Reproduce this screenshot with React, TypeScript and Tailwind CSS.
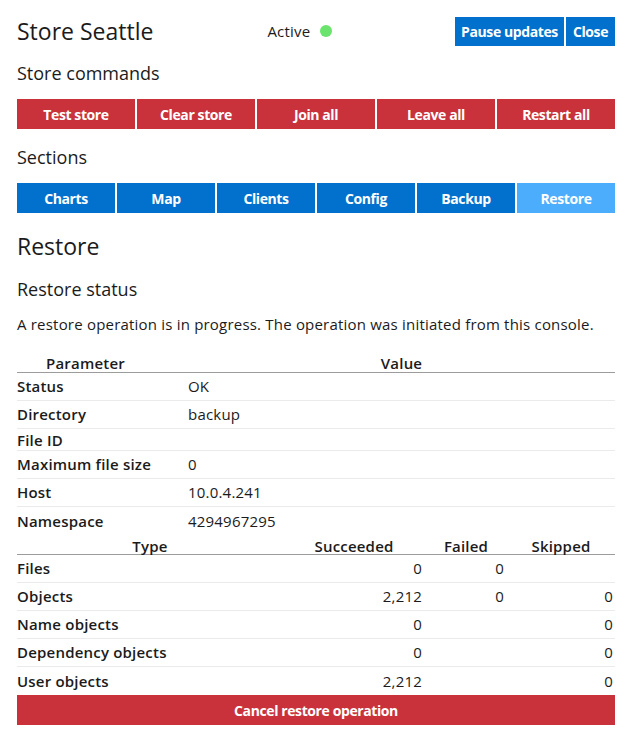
import React from "react";

const commands = ["Test store", "Clear store", "Join all", "Leave all", "Restart all"];
const sections = ["Charts", "Map", "Clients", "Config", "Backup", "Restore"];

const params: [string, string][] = [
  ["Status", "OK"],
  ["Directory", "backup"],
  ["File ID", ""],
  ["Maximum file size", "0"],
  ["Host", "10.0.4.241"],
  ["Namespace", "4294967295"],
];

const counts: [string, string, string, string][] = [
  ["Files", "0", "0", ""],
  ["Objects", "2,212", "0", "0"],
  ["Name objects", "0", "", "0"],
  ["Dependency objects", "0", "", "0"],
  ["User objects", "2,212", "", "0"],
];

function Btn({ label, tone }: { label: string; tone: "red" | "blue" | "light" }) {
  const bg =
    tone === "red" ? "bg-[#c9323b]" : tone === "blue" ? "bg-[#0271cd]" : "bg-[#4dadfd]";
  return (
    <button
      className={`${bg} flex-1 h-[30px] text-white text-[14px] font-bold tracking-[-0.4px] flex items-center justify-center`}
    >
      {label}
    </button>
  );
}

export default function App() {
  return (
    <div className="bg-white min-h-[738px] px-[17px] pt-[16px] font-['Open_Sans',sans-serif] text-[#1b1b1b]">
      {/* header */}
      <div className="flex items-center h-[30px]">
        <h1 className="text-[23px] leading-[30px] font-normal">Store Seattle</h1>
        <div className="flex items-center gap-[10px] text-[15px] tracking-[0.2px] ml-[114px]">
          <span>Active</span>
          <span className="w-[12px] h-[12px] rounded-full bg-[#6ae46d]" />
        </div>
        <div className="flex gap-[2px] ml-auto">
          <button className="bg-[#0271cd] text-white text-[14px] font-bold tracking-[-0.4px] h-[29px] px-[6px]">
            Pause updates
          </button>
          <button className="bg-[#0271cd] text-white text-[14px] font-bold tracking-[-0.4px] h-[29px] px-[7px]">
            Close
          </button>
        </div>
      </div>

      <h3 className="mt-[15px] text-[18px] leading-[24px]">Store commands</h3>
      <div className="mt-[14px] flex gap-[2px]">
        {commands.map((c) => (
          <Btn key={c} label={c} tone="red" />
        ))}
      </div>

      <h3 className="mt-[16px] text-[18px] leading-[24px]">Sections</h3>
      <div className="mt-[14px] flex gap-[2px]">
        {sections.map((s) => (
          <Btn key={s} label={s} tone={s === "Restore" ? "light" : "blue"} />
        ))}
      </div>

      <h2 className="mt-[17px] text-[23px] leading-[32px]">Restore</h2>
      <h3 className="mt-[15px] text-[18px] leading-[24px]">Restore status</h3>
      <p className="mt-[12px] text-[15px] leading-[22px] tracking-[0.2px]">
        A restore operation is in progress. The operation was initiated from this console.
      </p>

      {/* parameters */}
      <div className="mt-[17px] text-[15px] tracking-[0.2px]">
        <div className="grid grid-cols-[171px_1fr] h-[21px] items-center border-b border-[#9c9c9c] font-semibold">
          <div className="text-center pr-[34px]">Parameter</div>
          <div className="text-center">Value</div>
        </div>
        {params.map(([k, v], i) => (
          <div
            key={k}
            className={`grid grid-cols-[171px_1fr] items-center ${
              v === "" ? "h-[22px]" : "h-[28px]"
            } ${i < params.length - 1 ? "border-b border-[#ebebeb]" : ""}`}
          >
            <div className="font-semibold">{k}</div>
            <div>{v}</div>
          </div>
        ))}

        {/* counts */}
        <div className="grid grid-cols-[266px_142px_82px_1fr] h-[20px] items-center border-b border-[#9c9c9c] font-semibold">
          <div className="text-center">Type</div>
          <div className="text-center">Succeeded</div>
          <div className="text-center">Failed</div>
          <div className="text-center">Skipped</div>
        </div>
        {counts.map(([t, s, f, k], i) => (
          <div
            key={t}
            className={`grid grid-cols-[266px_142px_82px_1fr] h-[28px] items-center ${
              i < counts.length - 1 ? "border-b border-[#ebebeb]" : ""
            }`}
          >
            <div className="font-semibold">{t}</div>
            <div className="text-right pr-[3px]">{s}</div>
            <div className="text-right pr-[3px]">{f}</div>
            <div className="text-right pr-[2px]">{k}</div>
          </div>
        ))}
      </div>

      <button className="w-full h-[30px] bg-[#c9323b] text-white text-[14px] font-bold tracking-[-0.4px]">
        Cancel restore operation
      </button>
    </div>
  );
}
